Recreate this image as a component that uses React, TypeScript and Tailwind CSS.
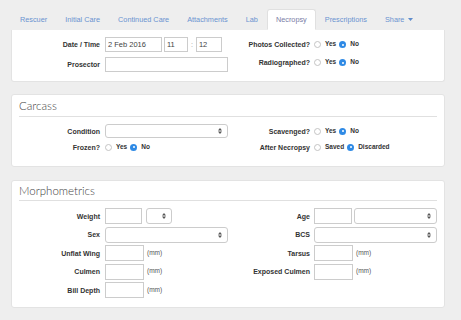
import React from "react";

const Radio = ({ checked }: { checked?: boolean }) =>
  checked ? (
    <span className="w-[7px] h-[7px] rounded-full bg-[#2f8ae5] flex items-center justify-center shrink-0">
      <span className="w-[2px] h-[2px] rounded-full bg-white" />
    </span>
  ) : (
    <span className="w-[7px] h-[7px] rounded-full border border-[#c4c4c4] bg-white shrink-0" />
  );

const RadioGroup = ({ options, checked }: { options: string[]; checked: number }) => (
  <div className="flex items-center">
    {options.map((o, i) => (
      <div key={o} className={`flex items-center ${i > 0 ? "ml-[3px]" : ""}`}>
        <Radio checked={i === checked} />
        <span className="ml-[4px] text-[6.5px] font-bold text-[#333] leading-none">{o}</span>
      </div>
    ))}
  </div>
);

const Arrows = () => (
  <svg width="4" height="7" viewBox="0 0 4 7" className="absolute right-[5px] top-1/2 -translate-y-1/2">
    <path d="M0 3 L2 0.5 L4 3 Z" fill="#555" />
    <path d="M0 4 L2 6.5 L4 4 Z" fill="#555" />
  </svg>
);

const Select = ({ w, h = 16 }: { w: string; h?: number }) => (
  <div className={`relative ${w} border border-[#cccccc] rounded-[3px] bg-white shrink-0`} style={{ height: h }}>
    <Arrows />
  </div>
);

const Input = ({ w, h = 16, value }: { w: string; h?: number; value?: string }) => (
  <div
    className={`${w} border border-[#cccccc] bg-white shrink-0 flex items-center pl-[2px] text-[7.5px] text-[#444] leading-none`}
    style={{ height: h }}
  >
    {value}
  </div>
);

const LabelL = ({ children }: { children: React.ReactNode }) => (
  <div className="w-[81px] shrink-0 text-right text-[7px] font-bold text-[#333] leading-none mr-[5px]">{children}</div>
);
const LabelR = ({ children }: { children: React.ReactNode }) => (
  <div className="w-[82px] shrink-0 text-right text-[7px] font-bold text-[#333] leading-none mr-[4px]">{children}</div>
);

const Mm = () => <span className="ml-[3px] text-[6.5px] text-[#555] leading-none">(mm)</span>;

const tabs = ["Rescuer", "Initial Care", "Continued Care", "Attachments", "Lab", "Necropsy", "Prescriptions", "Share"];

export default function App() {
  return (
    <div className="w-[461px] h-[320px] bg-[#eeeeee] overflow-hidden font-['Liberation_Sans',Arial,sans-serif]">
      <div className="ml-[11px] w-[434px] pt-[9px]">
        {/* Tabs */}
        <div className="flex h-[21px]">
          {tabs.map((t) => {
            const active = t === "Necropsy";
            return (
              <div
                key={t}
                className={`flex items-center px-[8px] border rounded-t-[3px] text-[7.3px] leading-none ${
                  active
                    ? "bg-white border-[#e0e0e0] border-b-white text-[#7a7ea6]"
                    : "border-transparent text-[#6a93d0]"
                }`}
              >
                {t}
                {t === "Share" && (
                  <svg width="5" height="3" viewBox="0 0 5 3" className="ml-[4px]">
                    <path d="M0 0 L5 0 L2.5 3 Z" fill="#5f8ccc" />
                  </svg>
                )}
              </div>
            );
          })}
        </div>

        {/* Panel 1 */}
        <div className="bg-white border border-[#e3e3e3] border-t-0 rounded-b-[3px] h-[52px] pl-[7px] pt-[7px] flex">
          <div className="w-[209px] flex flex-col gap-[5px]">
            <div className="flex items-center h-[15px]">
              <LabelL>Date / Time</LabelL>
              <Input w="w-[57px]" h={15} value="2 Feb 2016" />
              <div className="ml-[2px]" />
              <Input w="w-[24px]" h={15} value="11" />
              <span className="mx-[3px] text-[7px] text-[#999] leading-none">:</span>
              <Input w="w-[26px]" h={15} value="12" />
            </div>
            <div className="flex items-center h-[15px]">
              <LabelL>Prosector</LabelL>
              <Input w="w-[123px]" h={15} />
            </div>
          </div>
          <div className="w-[209px] flex flex-col gap-[3px]">
            <div className="flex items-center h-[15px]">
              <LabelR>Photos Collected?</LabelR>
              <RadioGroup options={["Yes", "No"]} checked={1} />
            </div>
            <div className="flex items-center h-[15px]">
              <LabelR>Radiographed?</LabelR>
              <RadioGroup options={["Yes", "No"]} checked={1} />
            </div>
          </div>
        </div>

        {/* Carcass */}
        <div className="mt-[12px] bg-white border border-[#e3e3e3] rounded-[3px] h-[73px] px-[7px] pt-[4px]">
          <div className="h-[13px] flex items-center text-[11.5px] font-light font-['Lato',sans-serif] text-[#444] leading-none">
            Carcass
          </div>
          <div className="mt-[4px] border-t border-[#e0e0e0]" />
          <div className="flex mt-[7px]">
            <div className="w-[209px] flex flex-col gap-[2px]">
              <div className="flex items-center h-[14px]">
                <LabelL>Condition</LabelL>
                <Select w="w-[123px]" h={14} />
              </div>
              <div className="flex items-center h-[14px]">
                <LabelL>Frozen?</LabelL>
                <RadioGroup options={["Yes", "No"]} checked={1} />
              </div>
            </div>
            <div className="w-[209px] flex flex-col gap-[2px]">
              <div className="flex items-center h-[14px]">
                <LabelR>Scavenged?</LabelR>
                <RadioGroup options={["Yes", "No"]} checked={1} />
              </div>
              <div className="flex items-center h-[14px]">
                <LabelR>After Necropsy</LabelR>
                <RadioGroup options={["Saved", "Discarded"]} checked={1} />
              </div>
            </div>
          </div>
        </div>

        {/* Morphometrics */}
        <div className="mt-[13px] bg-white border border-[#e3e3e3] rounded-[3px] h-[128px] px-[7px] pt-[3px]">
          <div className="h-[13px] flex items-center text-[11.5px] font-light font-['Lato',sans-serif] text-[#444] leading-none">
            Morphometrics
          </div>
          <div className="mt-[3px] border-t border-[#e0e0e0]" />
          <div className="flex mt-[7px]">
            <div className="w-[209px] flex flex-col gap-[2.5px]">
              <div className="flex items-center h-[16px]">
                <LabelL>Weight</LabelL>
                <Input w="w-[37px]" />
                <div className="ml-[4px]" />
                <Select w="w-[26px]" />
              </div>
              <div className="flex items-center h-[16px]">
                <LabelL>Sex</LabelL>
                <Select w="w-[123px]" />
              </div>
              <div className="flex items-center h-[16px]">
                <LabelL>Unflat Wing</LabelL>
                <Input w="w-[39px]" />
                <Mm />
              </div>
              <div className="flex items-center h-[16px]">
                <LabelL>Culmen</LabelL>
                <Input w="w-[39px]" />
                <Mm />
              </div>
              <div className="flex items-center h-[16px]">
                <LabelL>Bill Depth</LabelL>
                <Input w="w-[39px]" />
                <Mm />
              </div>
            </div>
            <div className="w-[209px] flex flex-col gap-[2.5px]">
              <div className="flex items-center h-[16px]">
                <LabelR>Age</LabelR>
                <Input w="w-[38px]" />
                <div className="ml-[2px]" />
                <Select w="w-[83px]" />
              </div>
              <div className="flex items-center h-[16px]">
                <LabelR>BCS</LabelR>
                <Select w="w-[123px]" />
              </div>
              <div className="flex items-center h-[16px]">
                <LabelR>Tarsus</LabelR>
                <Input w="w-[39px]" />
                <Mm />
              </div>
              <div className="flex items-center h-[16px]">
                <LabelR>Exposed Culmen</LabelR>
                <Input w="w-[39px]" />
                <Mm />
              </div>
            </div>
          </div>
        </div>
      </div>
    </div>
  );
}
